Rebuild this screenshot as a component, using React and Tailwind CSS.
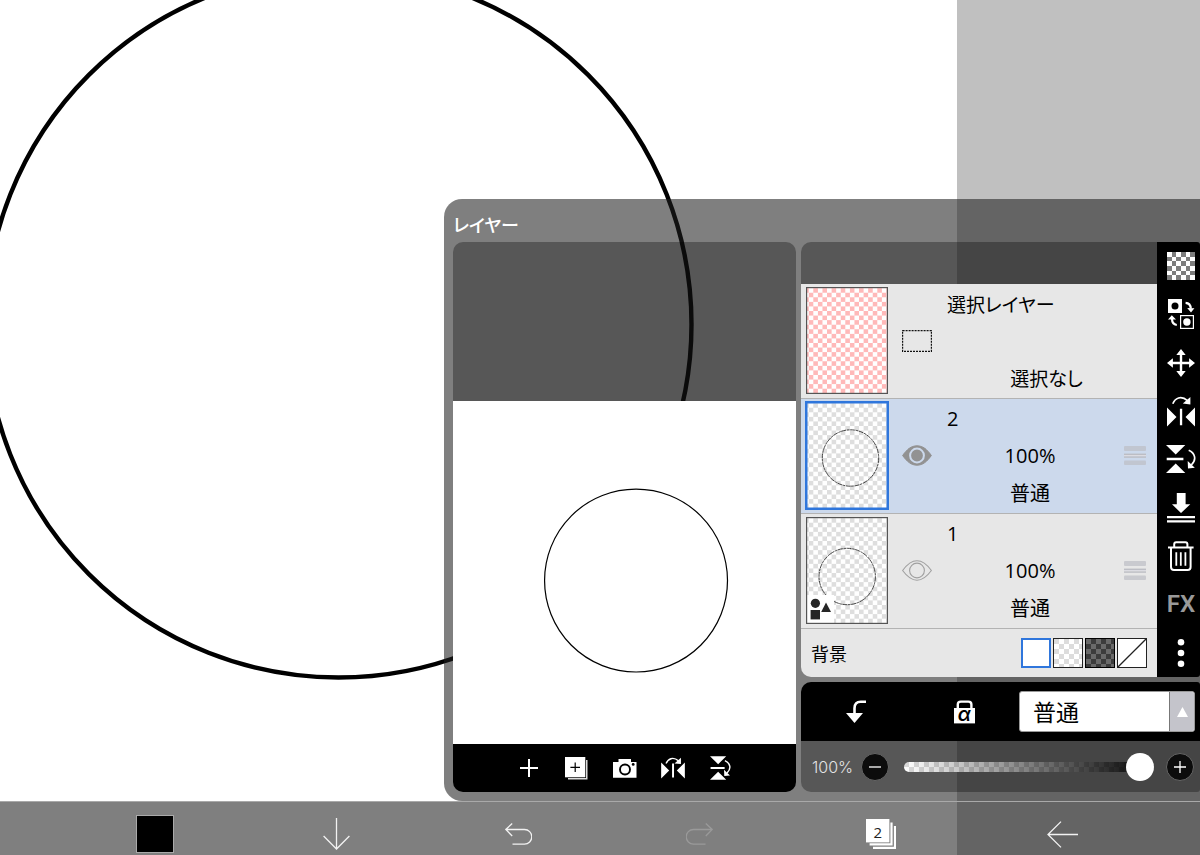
import { useState } from 'react'

const BLEND_MODES = ['普通', '乗算', 'スクリーン', 'オーバーレイ']

function PlusIcon() {
  return (
    <svg width="18" height="18" viewBox="0 0 18 18" stroke="white" strokeWidth="2">
      <path d="M9 0V18M0 9H18" />
    </svg>
  )
}

function DuplicateIcon() {
  return (
    <svg width="23" height="23" viewBox="0 0 23 23">
      <rect x="3" y="3" width="19.5" height="19.5" fill="#ddd" />
      <rect x="0" y="0" width="21" height="21" fill="#000" />
      <rect x="0" y="0" width="20.3" height="20.3" fill="#fff" />
      <path d="M10.2 5.5v9.6M5.4 10.3h9.6" stroke="#000" strokeWidth="1.2" />
    </svg>
  )
}

function CameraIcon() {
  return (
    <svg width="24" height="19" viewBox="0 0 24 19">
      <path d="M0 3H5.5V0H18V3H23.5V18.8H0Z" fill="#fff" />
      <circle cx="12" cy="10.5" r="5" fill="none" stroke="#000" strokeWidth="1.9" />
      <circle cx="20.2" cy="5.4" r="1.4" fill="#000" />
    </svg>
  )
}

function FlipHorizontalIcon({ compact }) {
  return (
    <svg
      width={compact ? 24 : 28}
      height={compact ? 22 : 31}
      viewBox={compact ? '0 5 28 26' : '0 0 28 31'}
      fill="#fff"
    >
      <path d="M0 11.5V30.5L9.5 21ZM28 11.5V30.5L18.5 21ZM12.9 12.7H15.2V29.3H12.9Z" />
      <g transform={compact ? 'translate(0 5)' : undefined}>
        <path d="M5.8 7.8C8 2.2 14 -1 20.5 4.6" fill="none" stroke="#fff" strokeWidth="1.7" />
        <path d="M23.4 1V8.4L15.8 7.6Z" />
      </g>
    </svg>
  )
}

function FlipVerticalIcon({ compact }) {
  return (
    <svg
      width={compact ? 21 : 30}
      height={compact ? 24 : 28}
      viewBox={compact ? '0 0 25 28' : '0 0 30 28'}
      fill="#fff"
    >
      <path d="M0 0H19.3L9.7 9.5ZM9.7 18.6L19.3 28H0ZM.7 12.8H17.4V15.3H.7Z" />
      <g transform={compact ? 'translate(-5 0)' : undefined}>
        <path d="M22.7 5.3C29 8 31 14.5 25.3 20" fill="none" stroke="#fff" strokeWidth="1.7" />
        <path d="M21.7 16L22 23.6L28.8 22.8Z" />
      </g>
    </svg>
  )
}

function CheckerIcon() {
  return (
    <svg width="28" height="28" viewBox="0 0 6 6" shapeRendering="crispEdges">
      <rect width="6" height="6" fill="#fff" />
      {[0, 1, 2, 3, 4, 5].map(row => (
        <path
          key={row}
          transform={`translate(${(row + 1) % 2} ${row})`}
          d="M0 0h1v1H0zM2 0h1v1H2zM4 0h1v1H4z"
          fill="#7d7d7d"
        />
      ))}
    </svg>
  )
}

function SwapIcon() {
  return (
    <svg width="27" height="30" viewBox="0 0 27 30" fill="#fff">
      <rect width="14" height="14" />
      <circle cx="7" cy="6.9" r="3.5" fill="#000" />
      <rect x="12.6" y="16.6" width="12.8" height="12.8" fill="none" stroke="#fff" strokeWidth="1.2" />
      <circle cx="18.9" cy="23" r="3.7" />
      <path d="M17.6 3.8C21 4 22.6 6 22.8 9.5" fill="none" stroke="#fff" strokeWidth="2.2" />
      <path d="M19.2 8.9L26.4 9.3L23 13.5ZM0 20.6L3.8 16.3L8 20.4Z" />
      <path d="M8.8 26C5.6 25.6 4 23.5 4 19.8" fill="none" stroke="#fff" strokeWidth="2.2" />
    </svg>
  )
}

function MoveIcon() {
  return (
    <svg width="28" height="28" viewBox="0 0 28 28" fill="#fff">
      <path d="M12.8 4H15.2V24H12.8ZM4 12.8H24V15.2H4Z" />
      <path d="M14 0L18.7 5.9H9.3ZM14 28L18.7 22.1H9.3ZM0 14L5.9 9.3V18.7ZM28 14L22.1 9.3V18.7Z" />
    </svg>
  )
}

function MergeDownIcon() {
  return (
    <svg width="28" height="30" viewBox="0 0 28 30" fill="#fff">
      <path d="M9.8 0H18.6V11.3H23.3L14 20L5 11.3H9.8ZM0 22.9H28V25.2H0ZM0 27.3H28V29.6H0Z" />
    </svg>
  )
}

function TrashIcon() {
  return (
    <svg width="26" height="30" viewBox="0 0 26 30" fill="none" stroke="#fff" strokeWidth="2">
      <path d="M0 6.6H25.6M6.2 6V3.2q0-2 2-2h9.2q2 0 2 2V6" />
      <path d="M3 6.6V26q0 3 3 3h13.6q3 0 3-3V6.6" />
      <path d="M8.3 11.3V24.8M12.8 11.3V24.8M17.4 11.3V24.8" strokeWidth="1.8" />
    </svg>
  )
}

function MoreIcon() {
  return (
    <svg width="8" height="30" viewBox="0 0 8 30" fill="#fff">
      <circle cx="4" cy="4.3" r="3.3" />
      <circle cx="4" cy="15" r="3.3" />
      <circle cx="4" cy="25.7" r="3.3" />
    </svg>
  )
}

function ClippingIcon() {
  return (
    <svg width="20" height="24" viewBox="0 0 20 24">
      <path d="M8.5 14V8.2q0-6.5 6.2-6.5H20" fill="none" stroke="#fff" strokeWidth="2.6" />
      <path d="M0 13H17L8.5 23Z" fill="#fff" />
    </svg>
  )
}

function AlphaLockIcon() {
  return (
    <svg width="21" height="30" viewBox="0 -3 21 30">
      <path d="M3.8 9V4.6q0-3 3-3h7.6q3 0 3 3V9" fill="none" stroke="#fff" strokeWidth="2.4" />
      <rect y="8" width="21" height="15.4" fill="#fff" />
      <text
        x="10.3"
        y="20.5"
        textAnchor="middle"
        className="fill-black font-['Inter',sans-serif] text-[19px] font-semibold italic"
      >
        α
      </text>
    </svg>
  )
}

function EyeIcon({ visible }) {
  const outline = 'M.6 10.5C5 4.5 9 .8 15 .8S25 4.5 29.4 10.5C25 16.5 21 20.2 15 20.2S5 16.5.6 10.5Z'
  if (visible) {
    return (
      <svg width="30" height="21" viewBox="0 0 30 21">
        <path d={outline} fill="#929292" stroke="#929292" />
        <circle cx="15" cy="10.5" r="6.9" fill="#929292" stroke="#ccd9ec" strokeWidth="2" />
      </svg>
    )
  }
  return (
    <svg width="30" height="21" viewBox="0 0 30 21" fill="none" stroke="#a0a0a0" strokeWidth="1.1">
      <path d={outline} />
      <circle cx="15" cy="10.5" r="7.4" />
    </svg>
  )
}

function HandleIcon() {
  return (
    <svg width="22" height="20" viewBox="0 0 22 20" fill="#bcbdc4">
      <rect width="22" height="5" rx="1" opacity=".7" />
      <rect y="7.6" width="22" height="1.4" />
      <rect y="9" width="22" height="1.4" fill="#dcdce2" />
      <rect y="10.4" width="22" height="1.4" />
      <rect y="14.5" width="22" height="4.6" rx="1" opacity=".7" />
    </svg>
  )
}

function Thumbnail({ id, color, circle, shapes, selected }) {
  return (
    <svg
      width="82"
      height="107"
      viewBox="0 0 82 107"
      className={selected ? 'outline-1 outline-[#2f76dc]' : ''}
    >
      <defs>
        <pattern id={id} x="2.75" y="1.15" width="9.14" height="9.14" patternUnits="userSpaceOnUse">
          <rect width="9.14" height="9.14" fill="#fff" />
          <path d="M4.57 0h4.57v4.57H4.57zM0 4.57h4.57v4.57H0z" fill={color} />
        </pattern>
      </defs>
      <rect width="82" height="107" fill={`url(#${id})`} />
      {circle && (
        <circle
          cx={circle.x}
          cy={circle.y}
          r="28.2"
          fill="none"
          stroke="#333"
          strokeWidth=".9"
          strokeDasharray="5 .8 2.5 .5"
        />
      )}
      {shapes && (
        <g fill="#262626">
          <rect x="1" y="78" width="27" height="28" fill="#fff" />
          <circle cx="9.4" cy="86.3" r="4.6" />
          <rect x="4.6" y="93" width="9.4" height="9.4" />
          <path d="M20 85.5L25 95H15.2Z" />
        </g>
      )}
      <rect
        x={selected ? 0.5 : 0.6}
        y={selected ? 0.5 : 0.6}
        width={selected ? 81 : 80.8}
        height={selected ? 106 : 105.8}
        fill="none"
        stroke={selected ? '#2f76dc' : '#555'}
        strokeWidth={selected ? 2 : 1.2}
      />
    </svg>
  )
}

function LayerRow({ layer, selected, onToggle }) {
  return (
    <li
      className={`flex h-[115px] items-center border-b border-[#b3b3b3] pr-[11px] pb-px pl-[5px] ${
        selected ? 'bg-[#ccd9ec]' : 'bg-[#e7e7e7]'
      }`}
    >
      <Thumbnail
        id={`layer-${layer.name}`}
        color="#dedede"
        circle={layer.circle}
        shapes={layer.shapes}
        selected={selected}
      />
      <button className="ml-[14px]" aria-label="表示切替" onClick={onToggle}>
        <EyeIcon visible={layer.visible} />
      </button>
      <div className="ml-[15px] flex-1 text-xl leading-[37px]">
        <p className="font-['Open_Sans','Noto_Sans_CJK_JP',sans-serif]">{layer.name}</p>
        <p className="text-center font-['Open_Sans',sans-serif]">{layer.opacity}%</p>
        <p className="text-center">{layer.mode}</p>
      </div>
      <button className="ml-[11px]" aria-label="並べ替え">
        <HandleIcon />
      </button>
    </li>
  )
}

function PreviewPane() {
  const tools = [
    { label: '追加', icon: <PlusIcon /> },
    { label: '複製', icon: <DuplicateIcon /> },
    { label: 'カメラ', icon: <CameraIcon /> },
    { label: '左右反転', icon: <FlipHorizontalIcon compact /> },
    { label: '上下反転', icon: <FlipVerticalIcon compact /> },
  ]
  return (
    <section className="flex min-w-0 flex-1 flex-col overflow-hidden rounded-[10px]">
      <div className="flex-1 bg-black/31" />
      <svg viewBox="0 0 342 342" className="w-full bg-white">
        <circle cx="182.5" cy="179" r="91.2" fill="none" stroke="#000" strokeWidth="1.2" />
      </svg>
      <div className="flex h-12 justify-center bg-black">
        {tools.map(tool => (
          <button key={tool.label} aria-label={tool.label} className="flex w-12 items-center justify-center">
            {tool.icon}
          </button>
        ))}
      </div>
    </section>
  )
}

function SideTools() {
  const tools = [
    { label: '透明表示', icon: <CheckerIcon /> },
    { label: '入れ替え', icon: <SwapIcon /> },
    { label: '移動', icon: <MoveIcon /> },
    { label: '左右反転', icon: <FlipHorizontalIcon /> },
    { label: '上下反転', icon: <FlipVerticalIcon /> },
    { label: '下と結合', icon: <MergeDownIcon /> },
    { label: '削除', icon: <TrashIcon /> },
  ]
  return (
    <div className="flex w-[43px] flex-col bg-black pl-[5px]">
      {tools.map(tool => (
        <button key={tool.label} aria-label={tool.label} className="flex flex-1 items-center justify-center">
          {tool.icon}
        </button>
      ))}
      <button className="flex-1 font-['Roboto',sans-serif] text-2xl font-semibold text-[#999]">FX</button>
      <button aria-label="その他" className="flex flex-1 items-center justify-center">
        <MoreIcon />
      </button>
    </div>
  )
}

function BackgroundRow() {
  return (
    <div className="flex h-12 items-center justify-between bg-[#e7e7e7] pr-[10px] pl-[10px]">
      <span className="text-lg">背景</span>
      <div className="flex gap-[2px]">
        <button aria-label="白" className="size-[30px] border-2 border-[#2f76dc] bg-white" />
        <button
          aria-label="透明（明）"
          className="size-[30px] border border-[#222] bg-[repeating-conic-gradient(#ffffff_0%_25%,#dcdcdc_0%_50%)] bg-[length:10px_10px]"
        />
        <button
          aria-label="透明（暗）"
          className="size-[30px] border border-black bg-[repeating-conic-gradient(#3c3c3c_0%_25%,#6a6a6a_0%_50%)] bg-[length:10px_10px]"
        />
        <button aria-label="なし" className="size-[30px] border border-[#222] bg-white">
          <svg viewBox="0 0 28 28" className="size-full">
            <path d="M0 28L28 0" stroke="#222" strokeWidth="1.3" />
          </svg>
        </button>
      </div>
    </div>
  )
}

function LayerList() {
  const [layers, setLayers] = useState([
    { name: '2', opacity: 100, mode: '普通', visible: true, circle: { x: 44.5, y: 56 } },
    { name: '1', opacity: 100, mode: '普通', visible: false, circle: { x: 41.2, y: 59.5 }, shapes: true },
  ])

  const toggle = name => {
    setLayers(layers.map(l => (l.name === name ? { ...l, visible: !l.visible } : l)))
  }

  return (
    <section className="flex overflow-hidden rounded-l-[10px] rounded-r-[3px]">
      <div className="min-w-0 flex-1">
        <div className="h-[42px] bg-black/31" />
        <ul>
          <li className="flex h-[115px] items-center border-b border-[#b3b3b3] bg-[#e7e7e7] pr-[11px] pb-px pl-[5px]">
            <Thumbnail id="selection" color="#ffb9b9" />
            <svg width="30" height="22" viewBox="0 0 30 22" className="ml-[14px]">
              <rect
                x=".6"
                y=".6"
                width="28.8"
                height="20.8"
                fill="none"
                stroke="#111"
                strokeWidth="1.2"
                strokeDasharray="2 1"
              />
            </svg>
            <div className="ml-[15px] flex h-[111px] flex-1 flex-col justify-between text-[19px] leading-[37px]">
              <p>選択レイヤー</p>
              <p className="text-center">選択なし</p>
            </div>
          </li>
          {layers.map(layer => (
            <LayerRow
              key={layer.name}
              layer={layer}
              selected={layer.name === '2'}
              onToggle={() => toggle(layer.name)}
            />
          ))}
        </ul>
        <BackgroundRow />
      </div>
      <SideTools />
    </section>
  )
}

function LayerControls() {
  const [mode, setMode] = useState('普通')
  const [opacity, setOpacity] = useState(100)

  return (
    <section className="overflow-hidden rounded-l-[10px] rounded-r-[3px]">
      <div className="flex h-[59px] items-center bg-black pr-[5px]">
        <button aria-label="クリッピング" className="flex flex-1 justify-center">
          <ClippingIcon />
        </button>
        <button aria-label="透明度ロック" className="flex flex-1 justify-center">
          <AlphaLockIcon />
        </button>
        <div className="relative w-[176px]">
          <select
            aria-label="合成モード"
            value={mode}
            onChange={e => setMode(e.target.value)}
            className="h-[41px] w-full appearance-none rounded-[3px] border border-[#999] bg-white pl-[13px] text-[23px] text-black"
          >
            {BLEND_MODES.map(m => (
              <option key={m}>{m}</option>
            ))}
          </select>
          <span className="pointer-events-none absolute inset-y-px right-px flex w-[25px] items-center justify-center rounded-r-[2px] border-l border-[#777] bg-[#c4c4cb]">
            <svg width="11" height="10" viewBox="0 0 11 10">
              <path d="M5.5 0L11 10H0Z" fill="#fff" />
            </svg>
          </span>
        </div>
      </div>
      <div className="flex h-[51px] items-center bg-black/31 pr-[6px] pl-[11px]">
        <label htmlFor="opacity" className="w-[49px] font-['Inter',sans-serif] text-base font-light text-[#e4e4e4]">
          {opacity}%
        </label>
        <button
          aria-label="下げる"
          onClick={() => setOpacity(Math.max(0, opacity - 1))}
          className="flex size-7 items-center justify-center rounded-full border border-[#666] bg-[#0c0c0c]"
        >
          <svg width="12" height="12" viewBox="0 0 12 12">
            <path d="M0 6H12" stroke="#fff" strokeWidth="1.3" />
          </svg>
        </button>
        <div className="relative mr-3 ml-[15px] flex min-w-0 flex-1 items-center">
          <div className="absolute inset-x-0 h-[10px] rounded-full bg-[repeating-conic-gradient(#ffffff_0%_25%,#dadada_0%_50%)] bg-[length:10px_10px]" />
          <div className="absolute inset-x-0 h-[10px] rounded-full bg-linear-to-r from-transparent to-black" />
          <input
            id="opacity"
            type="range"
            min="0"
            max="100"
            value={opacity}
            onChange={e => setOpacity(Number(e.target.value))}
            className="relative h-7 w-full appearance-none bg-transparent [&::-webkit-slider-thumb]:size-7 [&::-webkit-slider-thumb]:appearance-none [&::-webkit-slider-thumb]:rounded-full [&::-webkit-slider-thumb]:bg-white"
          />
        </div>
        <button
          aria-label="上げる"
          onClick={() => setOpacity(Math.min(100, opacity + 1))}
          className="flex size-7 items-center justify-center rounded-full border border-[#666] bg-[#0c0c0c]"
        >
          <svg width="12" height="12" viewBox="0 0 12 12">
            <path d="M0 6H12M6 0V12" stroke="#fff" strokeWidth="1.3" />
          </svg>
        </button>
      </div>
    </section>
  )
}

function BottomBar() {
  return (
    <nav className="grid h-[54px] grid-cols-6 items-center justify-items-center border-t border-[#a9a9a9] bg-[#1e1e1e]/57 pt-[11px] pr-[46px] pl-16">
      <button aria-label="カラー" className="size-[38px] border border-[#aaa] bg-black" />
      <button aria-label="下へ">
        <svg width="27" height="32" viewBox="0 0 27 32" fill="none" stroke="#f2f2f2" strokeWidth="1.3">
          <path d="M13.5 0V31M.6 18L13.5 31L26.4 18" />
        </svg>
      </button>
      <button aria-label="元に戻す">
        <svg width="27" height="22" viewBox="0 0 27 22" fill="none" stroke="#f2f2f2" strokeWidth="1.3">
          <path d="M7.2.5L.8 6.5L7.2 13M.8 6.5H19.5a7.2 7.2 0 0 1 0 14.6H7.5" />
        </svg>
      </button>
      <button aria-label="やり直し">
        <svg width="27" height="22" viewBox="0 0 27 22" fill="none" stroke="#9a9a9a" strokeWidth="1.3">
          <path d="M19.8.5L26.2 6.5L19.8 13M26.2 6.5H7.5a7.2 7.2 0 0 0 0 14.6H19.5" />
        </svg>
      </button>
      <button aria-label="レイヤー">
        <svg width="30" height="30" viewBox="0 0 30 30" fill="#fff">
          <path d="M7 27.8H27.9V7H30V30H7ZM3.6 24.3H24.4V3.5H26.6V26.6H3.6Z" />
          <rect width="23.4" height="23.4" />
          <text
            x="11.7"
            y="19"
            textAnchor="middle"
            className="fill-[#222] font-['Open_Sans',sans-serif] text-[15px]"
          >
            2
          </text>
        </svg>
      </button>
      <button aria-label="戻る">
        <svg width="32" height="27" viewBox="0 0 32 27" fill="none" stroke="#f2f2f2" strokeWidth="1.3">
          <path d="M31 13.5H1M14 .6L1 13.5L14 26.4" />
        </svg>
      </button>
    </nav>
  )
}

export default function App() {
  return (
    <main className="relative isolate flex min-h-screen flex-col justify-end overflow-hidden bg-[#c0c0c0] font-['Noto_Sans_CJK_JP',sans-serif] text-black">
      {/* drawing canvas, everything else floats on top of it */}
      <div className="absolute inset-y-0 right-[243px] left-0 -z-10 overflow-hidden bg-white">
        <svg width="720" height="720" viewBox="0 0 720 720">
          <circle cx="338.5" cy="324.5" r="353" fill="none" stroke="#000" strokeWidth="4.4" />
        </svg>
      </div>

      <div className="w-[63%] min-w-[640px] self-end rounded-l-[18px] bg-[#1e1e1e]/57 pb-[9px] pl-[9px]">
        <h1 className="h-[43px] pt-[7px] text-lg leading-9 font-medium text-white [font-feature-settings:'palt']">
          レイヤー
        </h1>
        <div className="flex gap-[5px] [font-feature-settings:'palt']">
          <PreviewPane />
          <div className="flex w-[399px] flex-col gap-[5px]">
            <LayerList />
            <LayerControls />
          </div>
        </div>
      </div>

      <BottomBar />
    </main>
  )
}
